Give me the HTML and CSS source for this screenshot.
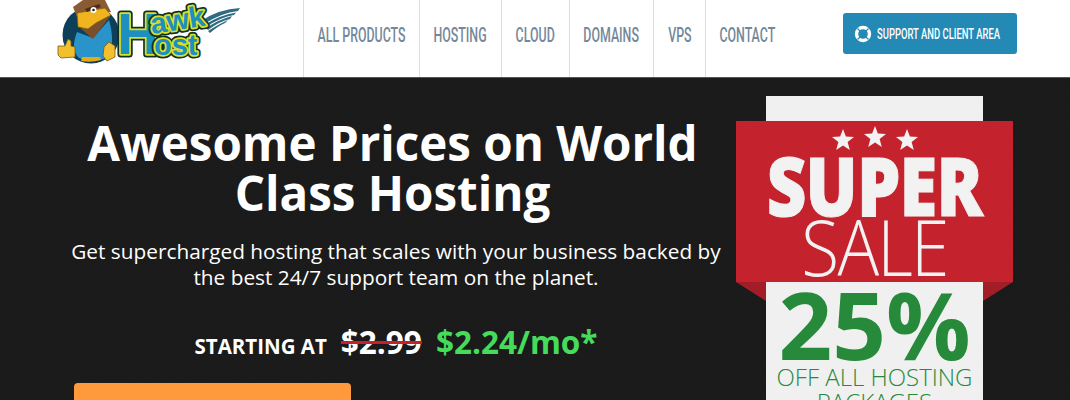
FILE: index.html
```html
<!DOCTYPE html>
<html lang="en">
<head>
    <meta charset="UTF-8">
    <meta name="viewport" content="width=device-width, initial-scale=1.0">
    <title>Hawk Host</title>
    <link rel="stylesheet" href="styles.css">
</head>
<body>
    <header class="site-header">
        <a class="logo" href="#">
            <svg width="190" height="66" viewBox="0 0 190 66">
                <g fill="#2f6c80">
                    <path d="M146 21 Q164 9 185 8 L183 11 Q166 13 149 24Z"/>
                    <path d="M149 25 Q165 15 181 12.500 L179 15 Q166 17 151 27Z"/>
                    <path d="M151 28 Q165 19 177 16 L175 19 Q165 21 153 30Z"/>
                    <path d="M153 31 Q164 24 173 20 L170 23 Q163 26 155 33Z"/>
                </g>
                <circle cx="36" cy="35" r="28.500" fill="#0d3f58"/>
                <path d="M22 32 Q15 50 24 58 Q36 64 52 58 Q61 44 54 20 L38 38Z" fill="#2a93c9"/>
                <path d="M26 61 L27 57 H45 L46 60 Q36 63 26 61Z" fill="#e8a81a"/>
                <path d="M25 28 L43 20 L56 15 L38 39Z" fill="#7a4f2c"/>
                <path d="M18 7 L28 0 H50 L56 12 L22 17Z" fill="#8a5a33"/>
                <path d="M22 13 L50 8 L56 15 L41 23 L33 29 L23 27Z" fill="#f0b41f" stroke="#7a5a12" stroke-width=".7"/>
                <path d="M30 9 L44 4 L46 7 L32 12Z" fill="#4a2e16"/>
                <circle cx="38.500" cy="10" r="3" fill="#fff"/>
                <circle cx="38.500" cy="10" r="1.300" fill="#222"/>
                <path d="M3 46 H10 L13 39 L16 41 V46 L20 47 V57 L6 58 L3 55Z" fill="#f2c02e" stroke="#7a5a12" stroke-width=".8"/>
                <path d="M49 47 L54 42 L60 46 V57 L52 61 L48 56Z" fill="#f2c02e" stroke="#7a5a12" stroke-width=".8"/>
                <g class="logo-big">
                    <text class="logo-out" x="62" y="54">H</text>
                    <text class="logo-mid" x="62" y="54">H</text>
                    <text class="logo-in" x="62" y="54">H</text>
                </g>
                <g class="logo-small">
                    <text class="logo-out" x="97" y="34" transform="rotate(-9 97 34)">awk</text>
                    <text class="logo-mid" x="97" y="34" transform="rotate(-9 97 34)">awk</text>
                    <text class="logo-in" x="97" y="34" transform="rotate(-9 97 34)">awk</text>
                    <text class="logo-out" x="99" y="55">ost</text>
                    <text class="logo-mid" x="99" y="55">ost</text>
                    <text class="logo-in" x="99" y="55">ost</text>
                </g>
            </svg>
        </a>
        <nav class="main-nav">
            <a href="#"><span>ALL PRODUCTS</span></a>
            <a href="#"><span>HOSTING</span></a>
            <a href="#"><span>CLOUD</span></a>
            <a href="#"><span>DOMAINS</span></a>
            <a href="#"><span>VPS</span></a>
            <a href="#"><span>CONTACT</span></a>
        </nav>
        <a class="support-btn" href="#">
            <svg width="18" height="18" viewBox="0 0 18 18">
                <circle cx="9" cy="9" r="6.500" fill="none" stroke="#fff" stroke-width="3.400"/>
                <g stroke="#2589b5" stroke-width="1.200">
                    <path d="M3.500 3.500 L6.400 6.400"/>
                    <path d="M14.500 3.500 L11.600 6.400"/>
                    <path d="M3.500 14.500 L6.400 11.600"/>
                    <path d="M14.500 14.500 L11.600 11.600"/>
                </g>
            </svg>
            <span>SUPPORT AND CLIENT AREA</span>
        </a>
    </header>

    <section class="hero">
        <div class="hero-text">
            <h1>Awesome Prices on World Class Hosting</h1>
            <p class="lead">Get supercharged hosting that scales with your business backed by the best 24/7 support team on the planet.</p>
            <div class="price-row">
                <span class="starting">STARTING AT</span>
                <span class="old-price">$2.99</span>
                <span class="new-price">$2.24/mo*</span>
            </div>
            <a class="cta" href="#"></a>
        </div>
        <div class="sale">
            <div class="sale-top"></div>
            <div class="ribbon">
                <div class="stars">
                    <svg class="star" viewBox="0 0 20 20"><polygon points="10,0 12.6,6.9 20,7.3 14.2,11.9 16.2,19 10,15 3.8,19 5.8,11.9 0,7.3 7.4,6.9"/></svg>
                    <svg class="star star-up" viewBox="0 0 20 20"><polygon points="10,0 12.6,6.9 20,7.3 14.2,11.9 16.2,19 10,15 3.8,19 5.8,11.9 0,7.3 7.4,6.9"/></svg>
                    <svg class="star" viewBox="0 0 20 20"><polygon points="10,0 12.6,6.9 20,7.3 14.2,11.9 16.2,19 10,15 3.8,19 5.8,11.9 0,7.3 7.4,6.9"/></svg>
                </div>
                <div class="super">SUPER</div>
                <div class="sale-word">SALE</div>
            </div>
            <div class="sale-body">
                <div class="percent">25%</div>
                <div class="off">OFF ALL HOSTING PACKAGES</div>
            </div>
        </div>
    </section>
</body>
</html>
```

FILE: styles.css
```css
html, body {
    margin: 0;
    padding: 0;
    height: 400px;
    overflow: hidden;
}
body {
    font-family: 'Open Sans', sans-serif;
    background-color: #1a1a1a;
}
a {
    text-decoration: none;
}
.site-header {
    display: flex;
    align-items: stretch;
    height: 77px;
    background: white;
    border-bottom: 1px solid #555;
    padding-left: 55px;
    overflow: hidden;
}
.logo {
    width: 190px;
    margin-right: 58px;
    display: block;
}
.logo text {
    font-family: 'Liberation Sans', sans-serif;
    font-weight: bold;
}
.logo-big {
    font-size: 58px;
}
.logo-small {
    font-size: 29px;
}
.logo-out {
    fill: none;
    stroke: #123022;
    stroke-width: 7;
    stroke-linejoin: round;
}
.logo-mid {
    fill: none;
    stroke: #d8e02a;
    stroke-width: 3.5;
    stroke-linejoin: round;
}
.logo-in {
    fill: #1d8fc0;
}
.main-nav {
    display: grid;
    grid-template-columns: 116px 82px 68px 84px 52px 83px;
    border-left: 1px solid #ddd;
}
.main-nav a {
    display: flex;
    justify-content: center;
    align-items: center;
    padding-bottom: 7px;
    border-right: 1px solid #ddd;
    font-family: 'Roboto', sans-serif;
    font-size: 21px;
    font-weight: 500;
    color: #74889a;
    white-space: nowrap;
}
.main-nav a:last-child {
    border-right: none;
}
.main-nav span {
    flex-shrink: 0;
    transform: scaleX(0.59);
}
.support-btn {
    display: flex;
    align-items: center;
    align-self: flex-start;
    margin: 13px 53px 0 auto;
    height: 41px;
    width: 174px;
    box-sizing: border-box;
    padding-left: 11px;
    background-color: #2589b5;
    border-radius: 3px;
    font-family: 'Roboto', sans-serif;
    font-size: 15px;
    font-weight: 500;
    color: white;
    white-space: nowrap;
}
.support-btn svg {
    flex-shrink: 0;
}
.support-btn span {
    flex-shrink: 0;
    margin-left: 5px;
    transform: scaleX(0.63);
    transform-origin: left center;
}
.hero {
    display: flex;
    align-items: flex-start;
    height: 322px;
    overflow: hidden;
    padding-left: 71px;
    background-color: #1a1a1a;
    background-image: repeating-linear-gradient(45deg, #1c1c1c 0 1px, transparent 1px 3px);
}
.hero-text {
    width: 650px;
    color: white;
    text-align: center;
}
h1 {
    margin: 40px 7px 0 0;
    font-size: 47.500px;
    line-height: 50px;
    font-weight: 700;
}
.lead {
    margin: 20px -5px 0;
    font-size: 20.800px;
    line-height: 26px;
}
.price-row {
    display: flex;
    align-items: baseline;
    justify-content: center;
    margin-top: 30px;
}
.starting {
    font-size: 20.500px;
    font-weight: 700;
    margin-right: 14px;
}
.old-price {
    font-size: 31.500px;
    font-weight: 700;
    margin-right: 14px;
    text-decoration: line-through;
    text-decoration-color: #c8202a;
    text-decoration-thickness: 3px;
}
.new-price {
    font-size: 31.500px;
    font-weight: 700;
    color: #45dc5a;
}
.cta {
    display: block;
    width: 277px;
    height: 60px;
    margin: 20px 0 0 3px;
    background-color: #ff9a3c;
    border-radius: 4px;
}
.sale {
    width: 217px;
    margin: 18px 0 0 45px;
    background: #f0f0f0;
    text-align: center;
}
.sale-top {
    height: 25px;
}
.ribbon {
    position: relative;
    margin: 0 -30px;
    height: 161px;
    background: #c4232e;
    color: #f2f2f2;
}
.ribbon::before,
.ribbon::after {
    content: "";
    position: absolute;
    top: 100%;
    width: 0;
    height: 0;
    border-top: 19px solid #a31d26;
}
.ribbon::before {
    left: 0;
    border-left: 30px solid transparent;
}
.ribbon::after {
    right: 0;
    border-right: 30px solid transparent;
}
.stars {
    display: flex;
    justify-content: center;
    gap: 10px;
    padding-top: 8px;
    height: 24px;
}
.star {
    width: 22px;
    height: 22px;
    fill: #f2f2f2;
}
.star-up {
    margin-top: -3px;
}
.super {
    font-size: 82px;
    font-weight: 800;
    line-height: 62px;
    letter-spacing: -1px;
    -webkit-text-stroke: 1px #f2f2f2;
    transform: scaleX(0.84);
}
.sale-word {
    font-size: 78px;
    font-weight: 300;
    line-height: 62px;
    letter-spacing: -2px;
    transform: scaleX(0.89);
}
.sale-body {
    color: #268a3a;
}
.percent {
    font-size: 94px;
    font-weight: 700;
    line-height: 84px;
}
.off {
    margin-top: -2px;
    font-size: 24px;
    font-weight: 300;
    line-height: 25px;
}
```
